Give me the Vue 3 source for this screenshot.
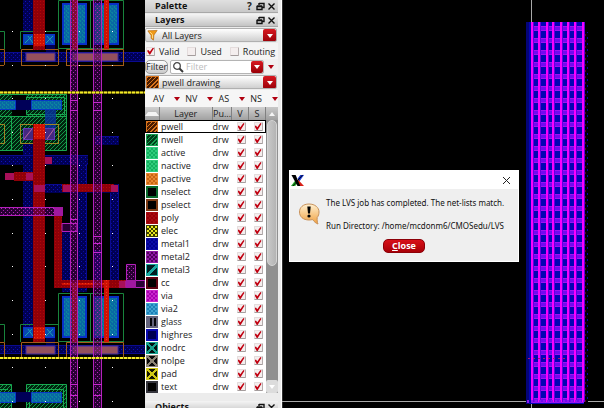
<script setup>
import { ref } from 'vue'

const layers = ref([
  ['pwell', '#4a1c00', '#d9741c', 'diag'],
  ['nwell', '#003c18', '#15a050', 'diag'],
  ['active', '#14b060', '#30cc7c', 'dots'],
  ['nactive', '#14b060', '#30cc7c', 'dots'],
  ['pactive', '#c86414', '#e88830', 'dots'],
  ['nselect', '#000000', '#0a6a2c', 'frame'],
  ['pselect', '#000000', '#7c3a14', 'frame'],
  ['poly', '#980008', '#a80a10', 'dots'],
  ['elec', '#e8e820', '#3c3c00', 'dots'],
  ['metal1', '#00008c', '#0a0aa8', 'dots'],
  ['metal2', '#50005c', '#8c18a4', 'dots'],
  ['metal3', '#001c20', '#18a8a0', 'slash'],
  ['cc', '#000000', '#5c0010', 'frame'],
  ['via', '#a800b0', '#c828cc', 'dots'],
  ['via2', '#1c80b8', '#40a4d0', 'dots'],
  ['glass', '#08080c', '#64647c', 'bars'],
  ['highres', '#000050', '#0a0ab0', 'frame'],
  ['nodrc', '#001010', '#14a08c', 'cross'],
  ['nolpe', '#080808', '#8c8474', 'cross'],
  ['pad', '#141400', '#d0c814', 'cross'],
  ['text', '#000000', '#34343c', 'frame'],
].map(([name, base, ink, kind]) => ({ name, base, ink, kind, v: true, s: true })))

const scope = ref('All Layers')
const current = ref('pwell drawing')
const search = ref('')
const flags = ref([
  { label: 'Valid', on: true },
  { label: 'Used', on: false },
  { label: 'Routing', on: false },
])
const open = ref(true)

const gridX = [12, 45, 79, 112]
const gridY = [31, 65, 98, 132, 165, 199, 233, 266, 300, 334, 367, 401]
const metalX = [531, 538, 546, 552, 560, 567, 574, 582]
const bandY = Array.from({ length: 32 }, (_, i) => 26 + i * 12)
const halves = [0, 293]
</script>

<template>
  <main class="desktop">
    <section class="canvas left" aria-label="Cell layout">
      <svg viewBox="0 0 145 408" preserveAspectRatio="xMinYMin slice">
        <defs>
          <pattern id="pBlue" width="4" height="4" patternUnits="userSpaceOnUse">
            <rect width="4" height="4" fill="#000054" /><rect width="1" height="1" x="1" y="1" fill="#1010b8" /><rect width="1" height="1" x="3" y="3" fill="#0808a0" />
          </pattern>
          <pattern id="pTeal" width="4" height="4" patternUnits="userSpaceOnUse">
            <rect width="4" height="4" fill="#0868a4" /><path d="M0 1h1M2 3h1M3 0h1" stroke="#10a098" />
          </pattern>
          <pattern id="pRed" width="3" height="3" patternUnits="userSpaceOnUse">
            <rect width="3" height="3" fill="#900008" /><rect width="1" height="1" x="1" y="1" fill="#b00808" />
          </pattern>
          <pattern id="pMag" width="4" height="4" patternUnits="userSpaceOnUse">
            <rect width="1" height="1" x="1" fill="#b428b8" /><rect width="1" height="1" x="3" y="2" fill="#a020a8" />
          </pattern>
          <pattern id="pGreen" width="4" height="4" patternUnits="userSpaceOnUse">
            <rect width="4" height="4" fill="#00240e" /><path d="M-1 5L5-1M-1 1L1-1M3 5L5 3" stroke="#14984a" />
          </pattern>
          <pattern id="pHot" width="3" height="3" patternUnits="userSpaceOnUse">
            <rect width="3" height="3" fill="#d01004" /><rect width="1" height="1" x="1" y="1" fill="#e83c18" />
          </pattern>
        </defs>
        <rect width="145" height="408" fill="#000" />

        <g fill="url(#pGreen)" stroke="#18a850">
          <path d="M-1 94.500H66.500V150.500H-1Z" />
          <path d="M-1 384.500H11.500V409H-1ZM26.500 384.500H66.500V409H26.500Z" />
          <path d="M11.500 116.500V150M-1 116.500H66M26.500 97.500H64.500V114.500H26.500Z" fill="none" />
          <path d="M-1 389.500H8M29.500 409V389.500H63.500V409" fill="none" />
        </g>
        <rect x="12" y="95" width="14" height="21" fill="#000" />
        <rect x="0" y="100" width="62" height="10" fill="#000058" />
        <rect x="0" y="392" width="62" height="10" fill="#000058" />
        <rect x="45" y="109" width="11" height="19" fill="#0830a0" opacity=".8" />
        <g fill="url(#pTeal)" stroke="#0838c8">
          <path d="M-1 100.500H15.500V109.500H-1ZM31.500 100.500H61.500V109.500H31.500Z" />
          <path d="M-1 392.500H15.500V402.500H-1ZM31.500 392.500H61.500V402.500H31.500Z" />
        </g>
        <g fill="none" stroke="#a08424"><rect x="20.500" y="124.500" width="38" height="19" /><path d="M-1 124.500H4.500V143.500H-1" /></g>
        <rect x="23.500" y="128.500" width="31" height="11" fill="#442880" stroke="#6038b8" />
        <path d="M24 139l8-10M47 139l7-10" stroke="#b868a0" />

        <g fill="url(#pBlue)">
          <rect x="23" width="11" height="33" /><rect x="23" y="144" width="11" height="184" />
          <rect x="0" y="155" width="88" height="10" /><rect x="33" y="184" width="80" height="9" />
          <rect x="95" y="136" width="24" height="9" /><rect x="110" y="184" width="9" height="104" />
          <rect x="78" y="164" width="9" height="128" /><rect x="62" y="232" width="9" height="60" />
          <rect x="93" y="250" width="9" height="38" />
          <rect y="52" width="145" height="10" /><rect y="345" width="145" height="9" />
        </g>
        <path d="M0 52.500H145M0 61.500H145M0 345.500H145M0 353.500H145M33 184.500H113M95 136.500H119M86.500 164V290M110.500 193V288M118.500 184V288M0 155.500H88" stroke="#0a0a90" />

        <g v-for="dy in halves" :key="dy" :transform="`translate(0 ${dy})`">
          <path d="M20.500 49V31.500H58.500M58.500 49V.5H123.500V49M90.500 0V49M-1 31.500H4.500V49M58 48.500H123" fill="none" stroke="#18843c" />
          <rect x="23.500" y="34.500" width="31" height="10" fill="#0848b0" stroke="#0830d0" />
          <path d="M25 43l7-7M28 36l5 7M47 36l6 7M46 43l7-7" stroke="#18a0b0" />
          <rect x="46" y="45" width="9" height="7" fill="#000050" />
          <g fill="url(#pTeal)" stroke="#0830c8" stroke-width="2"><rect x="63" y="4" width="23" height="40" /><rect x="94" y="4" width="24" height="40" /></g>
          <path d="M21.500 49.500H58.500V65M21.500 49.500V65M66.500 49.500V65M66.500 49.500H123.500V65M-1 49.500H4.500V65" fill="none" stroke="#a45c18" />
          <rect x="26" y="53" width="29" height="8" fill="#94505c" stroke="#3c28a0" /><rect x="72" y="53" width="46" height="8" fill="#94505c" stroke="#3c28a0" />
          <rect x="72" y="0" width="5" height="49" fill="url(#pHot)" /><rect x="104" y="0" width="5" height="49" fill="url(#pHot)" />
        </g>
        <path d="M0 65.500H4M21 65.500H58M66 65.500H124" stroke="#a45c18" />

        <g fill="url(#pRed)">
          <rect x="33" width="12" height="50" /><rect x="33" y="124" width="12" height="218" />
          <rect x="14" y="172" width="20" height="9" /><rect x="62" y="184" width="52" height="8" />
          <rect x="54" y="208" width="8" height="80" /><rect x="54" y="280" width="74" height="8" />
        </g>
        <g fill="url(#pHot)">
          <rect x="34" y="34" width="11" height="12" /><rect x="34" y="124" width="11" height="15" />
          <rect x="34" y="327" width="11" height="12" /><path d="M72 283h5v55h-5zM104 280h5v58h-5z" />
          <path d="M62 283h44v2H62z" />
        </g>
        <g fill="#a81058"><path d="M5 173h9v7H5zM26 173h7v7h-7zM45 157h7v7h-7zM34 185h11v7H34zM63 185h8v7h-8zM111 185h7v7h-7zM119 281h8v7h-8z" /></g>

        <g fill="#48005c" fill-opacity=".55" stroke="#b420bc">
          <rect x="70.500" y="-1" width="7" height="410" /><rect x="93.500" y="-1" width="8" height="410" />
          <path d="M-1 207.500H62.500V215.500H-1ZM62 223.500H77V231.500H62ZM126.500 264.500H135.500V280.500H126.500ZM126 280.500H145V287.500H126Z" />
        </g>
        <g fill="url(#pMag)"><path d="M70 0h8v408h-8zM93 0h9v408h-9zM0 207h62v9H0zM126 264h10v24h-10z" /></g>
        <path d="M70 100.500h8M70 110.500h8M93 102.500h9M93 110.500h9M70 219.500h8M93 236.500h9M93 243.500h9M93 252.500h9M70 384.500h8M93 384.500h9M70 395.500h8M93 395.500h9" stroke="#c428cc" />
        <path d="M54 207h9v9h-9zM126 280h10v8h-10z" fill="#a018a0" />

        <path d="M0 92.500H145M0 358H145" stroke="#786800" stroke-width="2" />
        <path d="M0 92.500H145M0 358H145" stroke="#f4ec28" stroke-width="2" stroke-dasharray="3 1" />
        <template v-for="y in gridY" :key="y">
          <rect v-for="x in gridX" :key="x" :x="x" :y="y" width="1" height="1" fill="#fff" />
        </template>
      </svg>
    </section>

    <aside class="panel">
      <header class="title first">
        <h2>Palette</h2>
        <button aria-label="Help">?</button>
        <button aria-label="Float palette"><svg viewBox="0 0 9 9"><path d="M3 1.500h5v4H6M3 1v2M1 4.500h5v3H1zM1 4h5" /></svg></button>
        <button aria-label="Close palette"><svg viewBox="0 0 9 9"><path d="M1.500 1.500l6 6M7.500 1.500l-6 6" /></svg></button>
      </header>
      <header class="title">
        <h2>Layers</h2>
        <button aria-label="Float layers"><svg viewBox="0 0 9 9"><path d="M3 1.500h5v4H6M3 1v2M1 4.500h5v3H1zM1 4h5" /></svg></button>
        <button aria-label="Close layers"><svg viewBox="0 0 9 9"><path d="M1.500 1.500l6 6M7.500 1.500l-6 6" /></svg></button>
      </header>

      <div class="combo">
        <svg class="lead" viewBox="0 0 14 14"><path d="M2 2l10-.5L8.500 6.500 8 12 5.500 10V7z" fill="#f09a18" stroke="#b86808" stroke-width=".7" /><path d="M4 3l3 3v4" stroke="#ffe08c" fill="none" /></svg>
        <select v-model="scope" aria-label="Layer scope"><option>All Layers</option></select>
        <span class="drop"><i class="tri"></i></span>
      </div>

      <div class="flags">
        <label v-for="f in flags" :key="f.label"><input v-model="f.on" type="checkbox">{{ f.label }}</label>
      </div>

      <div class="search">
        <button class="filter">Filter</button>
        <div class="field">
          <svg viewBox="0 0 12 12"><circle cx="5" cy="5" r="3.300" fill="#fff" stroke="#484848" stroke-width="1.300" /><path d="M7.500 7.500L11 11" stroke="#383838" stroke-width="2" /></svg>
          <input v-model="search" type="text" placeholder="Filter" aria-label="Filter layers">
          <span class="drop"><i class="tri"></i></span>
        </div>
        <button class="more" aria-label="Filter options"><i class="tri red"></i></button>
      </div>

      <div class="combo">
        <span class="lead diag swatch big"></span>
        <select v-model="current" aria-label="Current layer"><option>pwell drawing</option></select>
        <span class="drop"><i class="tri"></i></span>
      </div>

      <div class="modes">
        <button v-for="m in ['AV', 'NV', 'AS', 'NS']" :key="m">{{ m }}<i class="tri red"></i></button>
      </div>

      <div class="list">
        <table>
          <colgroup><col class="c-sw"><col><col class="c-pu"><col class="c-ck"><col class="c-ck"></colgroup>
          <thead>
            <tr><th><i class="tri up"></i></th><th>Layer</th><th>Pu...</th><th>V</th><th>S</th></tr>
          </thead>
          <tbody>
            <tr v-for="(l, i) in layers" :key="l.name" :class="{ current: i === 0 }">
              <td><span class="swatch" :class="l.kind" :style="{ '--base': l.base, '--ink': l.ink }"></span></td>
              <td>{{ l.name }}</td>
              <td>drw</td>
              <td><input v-model="l.v" type="checkbox" :aria-label="l.name + ' visible'"></td>
              <td><input v-model="l.s" type="checkbox" :aria-label="l.name + ' selectable'"></td>
            </tr>
          </tbody>
        </table>
        <div class="scroll">
          <button aria-label="Scroll up"><i class="tri up"></i></button>
          <div class="thumb"></div>
          <button class="down" aria-label="Scroll down"><i class="tri pale"></i></button>
        </div>
      </div>

      <header class="title objects">
        <h2>Objects</h2>
        <button aria-label="Float objects"><svg viewBox="0 0 9 9"><path d="M3 1.500h5v4H6M3 1v2M1 4.500h5v3H1zM1 4h5" /></svg></button>
        <button aria-label="Close objects"><svg viewBox="0 0 9 9"><path d="M1.500 1.500l6 6M7.500 1.500l-6 6" /></svg></button>
      </header>
    </aside>

    <section class="canvas right" aria-label="Array layout">
      <svg viewBox="282 0 322 408" preserveAspectRatio="xMaxYMin slice">
        <defs>
          <pattern id="pEdge" width="4" height="6" patternUnits="userSpaceOnUse">
            <rect width="4" height="6" fill="#000008" /><rect width="1" height="2" x="3" y="1" fill="#0808a0" /><rect width="1" height="2" x="1" y="4" fill="#600018" />
          </pattern>
        </defs>
        <rect x="282" width="1" height="408" fill="#303030" />
        <path d="M531.500 0V22M531.500 404V408M282 401.500H604" stroke="#a8a8a8" />
        <rect x="584" y="32" width="4" height="370" fill="url(#pEdge)" />
        <rect x="526" y="22" width="58" height="382" fill="#0404b4" />
        <rect x="526" y="22" width="3" height="382" fill="#040478" />
        <g v-for="y in bandY" :key="y">
          <rect x="531" :y="y" width="53" height="5" fill="#7408f0" />
          <rect x="531" :y="y" width="53" height="1" fill="#a010f4" />
          <rect x="531" :y="y + 4" width="53" height="1" fill="#a010f4" />
        </g>
        <g v-for="x in metalX" :key="x">
          <rect :x="x" y="22" width="2" height="380" fill="#fa00ff" />
          <rect :x="x + 2" y="22" width="1" height="380" fill="#6400dc" />
        </g>
        <path d="M527 401.500H584" stroke="#8c18f0" stroke-width="3" stroke-dasharray="2 2" />
        <path d="M528 358.500H566" stroke="#a81078" stroke-dasharray="2 3" />
      </svg>

      <div v-if="open" class="dialog" role="dialog" aria-label="LVS result">
        <div class="bar">
          <svg viewBox="0 0 14 14">
            <path d="M10 1H14L9 8 7 5z" fill="#1838d0" /><path d="M5 6.500L7.500 9 4.500 13H0z" fill="#20a828" /><path d="M8 6.500l6 6.500H9L6 8z" fill="#d82018" />
            <path d="M.5 1h4.500l5 12H7z" fill="#000" /><path d="M12.500 1L2 13" stroke="#000" />
          </svg>
          <button aria-label="Close window" @click="open = false"><svg viewBox="0 0 9 9"><path d="M1 1l7 7M8 1L1 8" /></svg></button>
        </div>
        <div class="body">
          <svg viewBox="0 0 22 22">
            <defs><linearGradient id="bub" x1="0" y1="0" x2="0" y2="1"><stop offset="0" stop-color="#fff0d0" /><stop offset="1" stop-color="#f0a040" /></linearGradient></defs>
            <path d="M11 1C5 1 1.500 4.500 1.500 9S5 17 11 17c1.500 0 2.500-.2 3.500-.5 1.500 2 3.500 4 5.500 4.500-.8-1.800-1-4-.8-6.500C20.500 13 21 11 21 9c0-4.500-4-8-10-8z" fill="url(#bub)" stroke="#c8925c" />
            <path d="M9.300 3.500h3.400l-.7 7h-2z" /><circle cx="11" cy="13" r="1.600" />
          </svg>
          <div class="message">
            <p>The LVS job has completed. The net-lists match.</p>
            <p>Run Directory: /home/mcdonm6/CMOSedu/LVS</p>
          </div>
        </div>
        <button class="close" @click="open = false"><u>C</u>lose</button>
      </div>
    </section>
  </main>
</template>

<style>
body { background: #000; overflow: hidden; }
</style>

<style scoped>
* { box-sizing: border-box; }
.desktop { display: flex; height: 100vh; overflow: hidden; font: 9px/13px "Open Sans", "Noto Sans", sans-serif; color: #222; }
.canvas { min-width: 0; background: #000; overflow: hidden; }
.canvas > svg { display: block; width: 100%; height: 100%; }
.left { flex: 145 1 0; }
.right { flex: 322 1 0; position: relative; }
button, input, select { margin: 0; padding: 0; border: 0; background: none; font: inherit; color: inherit; }
.tri { display: block; flex: none; border: 3px solid transparent; border-top: 4px solid #fff; border-bottom: 0; }
.tri.red { border-top-color: #b00010; }
.tri.up { border-top: 0; border-bottom: 4px solid #f4f4f4; margin: auto; }

.panel { flex: 0 0 137px; display: flex; flex-direction: column; background: #ececec; border-right: 1px solid #fff; padding-right: 3px; overflow: hidden; }
.title { flex: none; display: flex; align-items: center; gap: 2px; height: 13px; padding: 0 2px 0 10px; margin-top: 1px; background: linear-gradient(#f4f4f4, #c4c4c4); border-bottom: 1px solid #a8a8a8; }
.title.first { margin: 0; background: linear-gradient(#e0e0e0, #c8c8c8); }
.title h2 { flex: 1; margin: 0; font-size: 9px; line-height: 12px; color: #111; }
.title button { width: 9px; height: 11px; font-size: 10px; font-weight: bold; line-height: 11px; display: grid; place-items: center; }
.title svg { width: 9px; height: 9px; fill: none; stroke: #111; stroke-width: 1.4; }

.combo { flex: none; display: grid; grid-template-columns: 15px 1fr 13px; align-items: center; height: 14px; margin: 1px 1px 1px 0; background: linear-gradient(#fff, #d0d0d0); border: 1px solid #b0b0b0; border-radius: 2px; overflow: hidden; }
.combo select { grid-area: 1 / 1 / 2 / 4; appearance: none; width: 100%; height: 12px; padding-left: 16px; line-height: 12px; }
.lead { grid-area: 1 / 1 / 2 / 2; width: 13px; height: 13px; pointer-events: none; }
.drop { grid-area: 1 / 3 / 2 / 4; display: grid; place-items: center; height: 100%; background: linear-gradient(#d81820, #980008); border-radius: 2px; pointer-events: none; }

.flags { flex: none; display: flex; align-items: center; gap: 8px; height: 16px; padding-left: 1px; background: #f4f4f4; }
.flags label { display: flex; align-items: center; gap: 4px; }
input[type="checkbox"] { appearance: none; display: block; flex: none; width: 9px; height: 9px; background: #f4eeee; border: 1px solid; border-color: #e4dcdc #b4acac #a49c9c #e4dcdc; border-radius: 1px; }
input[type="checkbox"]:checked::before { content: ""; display: block; width: 7px; height: 7px; background: #c00010; clip-path: polygon(0 45%, 20% 35%, 40% 60%, 85% 0, 100% 12%, 45% 100%, 32% 100%); }

.search { flex: none; display: flex; align-items: center; height: 15px; background: #f0f0f0; }
.filter { width: 23px; height: 14px; line-height: 12px; background: linear-gradient(#fff, #c8c8c8); border: 1px solid #989898; border-radius: 5px; }
.field { flex: 1; min-width: 0; display: grid; grid-template-columns: 14px 1fr 12px; align-items: center; height: 14px; margin-left: 2px; background: #fff; border: 1px solid #b4b4b4; border-radius: 2px; }
.field svg { width: 12px; height: 12px; margin-left: 1px; }
.field input { min-width: 0; width: 100%; height: 12px; padding-left: 1px; outline: 0; }
.field input::placeholder { color: #bcbcbc; opacity: 1; }
.more { width: 14px; height: 14px; display: grid; place-items: center; }

.modes { flex: none; display: flex; justify-content: space-between; height: 17px; padding-left: 8px; background: #f6f6f6; }
.modes button { display: flex; align-items: center; gap: 10px; }

.list { flex: none; display: flex; }
table { flex: 1; min-width: 0; table-layout: fixed; border-collapse: collapse; background: #fff; }
.c-sw { width: 14px; }
.c-pu { width: 19px; }
.c-ck { width: 17px; }
th { height: 13px; padding: 0; font-weight: normal; line-height: 12px; background: linear-gradient(#d0d0d0, #a0a0a0); border-right: 1px solid #808080; white-space: nowrap; }
td { height: 13px; padding: 0; line-height: 12px; white-space: nowrap; }
td:nth-child(1) { padding-left: 1px; }
td:nth-child(2) { padding-left: 2px; }
td:nth-child(4), td:nth-child(5) { padding-left: 5px; }
.current { outline: 1px solid #000; outline-offset: -1px; }
.swatch { display: block; width: 12px; height: 12px; background-color: var(--base); border: 1px solid var(--ink); }
.swatch.big { --base: #4a1c00; --ink: #d9741c; width: 13px; height: 13px; }
.diag { background-image: repeating-linear-gradient(135deg, var(--ink) 0 1px, transparent 1px 3px); }
.dots { background-image: conic-gradient(var(--ink) 25%, transparent 0 50%, var(--ink) 0 75%, transparent 0); background-size: 4px 4px; }
.frame { border-width: 2px; }
.slash { background-image: linear-gradient(135deg, transparent 40%, var(--ink) 42% 60%, transparent 62%); }
.bars { background-image: linear-gradient(90deg, var(--ink) 50%, transparent 0); background-size: 4px 4px; border-width: 2px; }
.cross { background-image: linear-gradient(45deg, transparent 42%, var(--ink) 44% 56%, transparent 58%), linear-gradient(135deg, transparent 42%, var(--ink) 44% 56%, transparent 58%); }

.scroll { flex: none; width: 12px; display: flex; flex-direction: column; background: #909090; }
.scroll button { height: 13px; display: grid; place-items: center; background: linear-gradient(#c8c8c8, #a0a0a0); }
.scroll .down { margin-top: auto; background: #dcdcdc; border-radius: 2px; }
.thumb { flex: 0 0 51%; margin: 0 1px; background: linear-gradient(90deg, #c8c8c8, #b4b4b4); border: 1px solid #d4d4d4; border-radius: 5px; }
.objects { margin-top: 8px; }

.dialog { position: absolute; top: 170px; left: 7px; right: 85px; display: flex; flex-direction: column; height: 92px; background: #efefef; border: 1px solid #fff; }
.bar { display: flex; align-items: center; justify-content: space-between; height: 18px; padding: 0 7px 0 1px; background: #fff; }
.bar > svg { width: 13px; height: 13px; }
.bar button { width: 9px; height: 9px; display: grid; }
.bar button svg { width: 9px; height: 9px; stroke: #222; }
.body { display: flex; padding: 7px 0 0 8px; }
.body svg { flex: none; width: 22px; height: 22px; margin: 7px 6px 0 0; }
.message { color: #111; font-family: "Noto Sans", "Open Sans", sans-serif; font-size: 8px; white-space: nowrap; }
.message p { margin: 0 0 10px; }
.close { align-self: center; width: 42px; height: 14px; margin-top: -3px; color: #fff; font-weight: bold; line-height: 12px; background: linear-gradient(#d81018, #a80008); border: 1px solid #8c0008; border-radius: 5px; }
</style>
